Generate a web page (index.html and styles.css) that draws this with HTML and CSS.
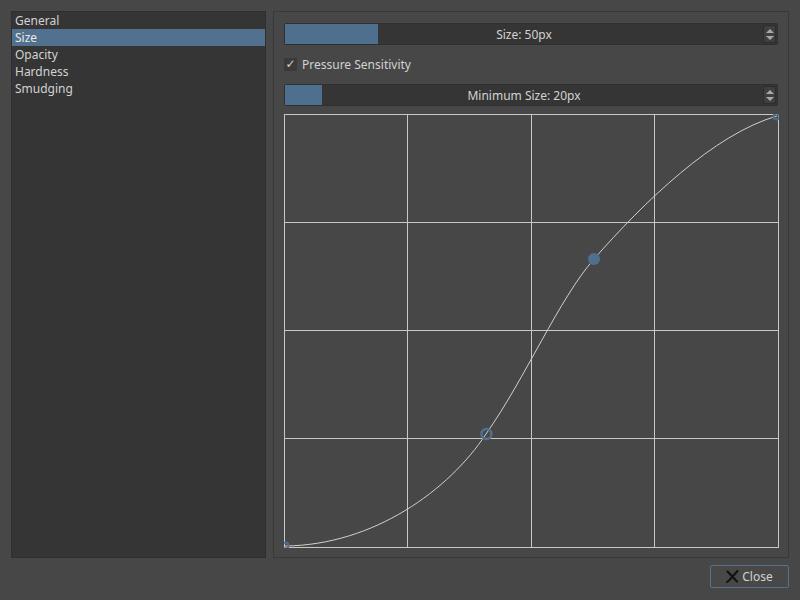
FILE: index.html
```html
<!DOCTYPE html>
<html>
<head>
<meta charset="utf-8">
<link rel="stylesheet" href="styles.css">
</head>
<body>
<div class="dialog">
  <div class="main">
    <ul class="list">
      <li>General</li>
      <li class="sel">Size</li>
      <li>Opacity</li>
      <li>Hardness</li>
      <li>Smudging</li>
    </ul>
    <div class="panel">
      <div class="slider">
        <div class="fill" style="width:93px"></div>
        <span class="label">Size: 50px</span>
        <div class="spin"><i class="up"></i><i class="down"></i></div>
      </div>
      <label class="check">
        <span class="box">✓</span>
        <span>Pressure Sensitivity</span>
      </label>
      <div class="slider">
        <div class="fill" style="width:37px"></div>
        <span class="label">Minimum Size: 20px</span>
        <div class="spin"><i class="up"></i><i class="down"></i></div>
      </div>
      <svg class="graph" width="495" height="434" viewBox="0 0 495 434">
        <g stroke="#c8c8c8" stroke-width="1" fill="none">
          <rect x="0.5" y="0.5" width="494" height="433"/>
          <line x1="123.5" y1="0" x2="123.5" y2="434"/>
          <line x1="247.5" y1="0" x2="247.5" y2="434"/>
          <line x1="370.5" y1="0" x2="370.5" y2="434"/>
          <line x1="0" y1="108.5" x2="495" y2="108.5"/>
          <line x1="0" y1="216.5" x2="495" y2="216.5"/>
          <line x1="0" y1="324.5" x2="495" y2="324.5"/>
        </g>
        <path d="M1,432 C90,431 165,376 202,320 C242,263 275,185 310,145 C360,88 430,20 493,2" stroke="#d0d0d0" stroke-width="1" fill="none"/>
        <circle cx="1.5" cy="431.5" r="3" stroke="#4f6f8f" stroke-width="1.8" fill="none"/>
        <circle cx="202.5" cy="320" r="5" stroke="#52718f" stroke-width="2.4" fill="none"/>
        <circle cx="310" cy="145" r="6" fill="#4f6f8f"/>
        <circle cx="492.5" cy="2.5" r="3" stroke="#4f6f8f" stroke-width="1.8" fill="none"/>
      </svg>
    </div>
  </div>
  <div class="footer">
    <button class="close">
      <svg width="13" height="13" viewBox="0 0 13 13"><path d="M1.5,1.5 L11,11.5 M11.5,1 L3,10.5 L1,12" stroke="#111" stroke-width="2" fill="none" stroke-linecap="round"/></svg>
      <span>Close</span>
    </button>
  </div>
</div>
</body>
</html>
```
FILE: styles.css
```css
html, body {
  margin: 0;
  padding: 0;
  background: #474747;
  width: 800px;
  height: 600px;
  overflow: hidden;
  font-family: "Noto Sans", "Open Sans", sans-serif;
  font-size: 12px;
  color: #d2d2d2;
}
.dialog {
  padding: 11px 11px 0 11px;
}
.main {
  display: flex;
  gap: 7px;
  height: 547px;
}
.list {
  list-style: none;
  margin: 0;
  padding: 0;
  width: 255px;
  box-sizing: border-box;
  background: #353535;
  border: 1px solid #2f2f2f;
}
.list li {
  height: 17px;
  line-height: 18px;
  padding-left: 3px;
  overflow: hidden;
}
.list li.sel {
  background: #52718f;
  color: #e8e8e8;
}
.panel {
  width: 516px;
  box-sizing: border-box;
  border: 1px solid #393939;
  padding: 11px 10px 0 10px;
  display: flex;
  flex-direction: column;
}
.slider {
  position: relative;
  height: 22px;
  width: 494px;
  box-sizing: border-box;
  background: #353535;
  border: 1px solid #303030;
  border-radius: 2px;
  display: flex;
  align-items: center;
  justify-content: center;
  padding-right: 14px;
}
.fill {
  position: absolute;
  left: 0;
  top: 0;
  bottom: 0;
  background: #4f6f8f;
}
.label {
  position: relative;
  color: #d2d2d2;
}
.spin {
  position: absolute;
  right: 1px;
  top: 1px;
  bottom: 1px;
  width: 11px;
  background: #3f3f3f;
  border: 1px solid #2d2d2d;
  border-radius: 2px;
  display: flex;
  flex-direction: column;
  align-items: center;
  justify-content: center;
  gap: 3px;
}
.spin i {
  width: 0;
  height: 0;
  border-left: 4px solid transparent;
  border-right: 4px solid transparent;
}
.spin .up { border-bottom: 4px solid #a8a8a8; }
.spin .down { border-top: 4px solid #a8a8a8; }
.check {
  display: flex;
  align-items: center;
  gap: 5px;
  height: 17px;
  margin-top: 11px;
  line-height: 17px;
}
.check .box {
  width: 13px;
  height: 13px;
  background: #3a3a3a;
  color: #d4d4d4;
  font-family: "DejaVu Sans", sans-serif;
  font-size: 12px;
  line-height: 13px;
  text-align: center;
}
.check + .slider {
  margin-top: 11px;
}
.graph {
  display: block;
  margin-top: 8px;
}
.footer {
  display: flex;
  justify-content: flex-end;
  padding-top: 7px;
}
.close {
  width: 79px;
  height: 23px;
  box-sizing: border-box;
  background: #484848;
  border: 1px solid #56718c;
  border-radius: 2px;
  color: #d2d2d2;
  font-family: "Noto Sans", "Open Sans", sans-serif;
  font-size: 12px;
  display: flex;
  align-items: center;
  justify-content: center;
  gap: 3px;
  padding: 0;
}
.close svg { display: block; }
```
